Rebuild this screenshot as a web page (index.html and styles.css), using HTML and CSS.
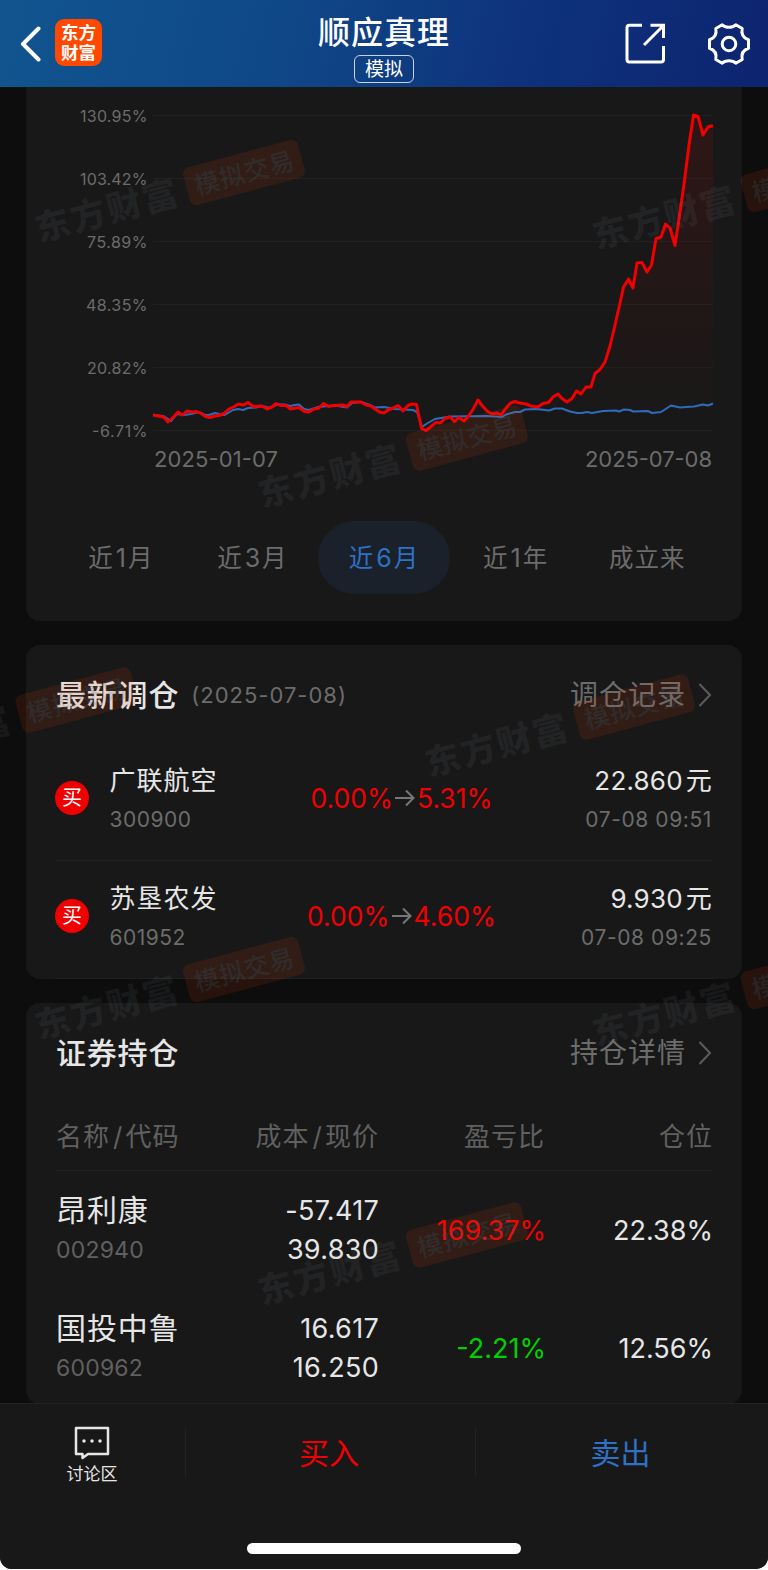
FILE: index.html
```html
<!DOCTYPE html>
<html lang="zh-CN">
<head>
<meta charset="utf-8">
<title>顺应真理</title>
<link rel="stylesheet" href="styles.css">
</head>
<body>
<div class="phone">
  <header class="topbar">
    <div class="topbar-side">
      <svg class="back" width="22" height="36" viewBox="0 0 22 36"><path d="M18.500 2.500 3 18l15.500 15.500" /></svg>
      <div class="logo"><span>东方</span><span>财富</span></div>
    </div>
    <div class="heading">
      <h1>顺应真理</h1>
      <span class="tag">模拟</span>
    </div>
    <div class="topbar-side topbar-end">
      <svg class="share" width="42" height="42" viewBox="0 0 42 42"><path d="M17 2.200H4.500Q2 2.200 2 4.700V36.500Q2 39 4.500 39H36Q38.500 39 38.500 36.500V23M25.500 2.200H38.500V15M38 3 19 22"/></svg>
      <svg class="gear" width="44" height="44" viewBox="0 0 44 44"><path d="M15.200 2.800C18.500 6 25.500 6 28.800 2.800L35.200 6.500C34.200 11.500 36 16 41.500 17.800V26.200C36 28 34.200 32.500 35.200 37.500L28.800 41.200C25.500 38 18.500 38 15.200 41.200L8.800 37.500C9.800 32.500 8 28 2.500 26.200V17.800C8 16 9.800 11.500 8.800 6.500Z"/><circle cx="22" cy="22" r="6.800"/></svg>
    </div>
  </header>

  <main class="content">
    <section class="card chart-card">
      <svg class="chart" width="716" height="400" viewBox="26 87 716 400">
        <defs><linearGradient id="area" x1="0" y1="115" x2="0" y2="431" gradientUnits="userSpaceOnUse"><stop offset="0" stop-color="#f00" stop-opacity=".1"/><stop offset="1" stop-color="#f00" stop-opacity="0"/></linearGradient></defs>
        <path class="grid" d="M153 115.500H713M153 178.500H713M153 241.500H713M153 304.500H713M153 367.500H713M153 430.500H713"/>
        <g class="axis">
          <text x="80" y="121.500" textLength="67.500">130.95%</text>
          <text x="80" y="184.500" textLength="67.500">103.42%</text>
          <text x="87" y="247.500" textLength="60.500">75.89%</text>
          <text x="86" y="310.500" textLength="61.500">48.35%</text>
          <text x="87" y="373.500" textLength="60.500">20.82%</text>
          <text x="92" y="436.500" textLength="55.500">-6.71%</text>
        </g>
        <g class="dates">
          <text x="154" y="466.500" textLength="124">2025-01-07</text>
          <text x="585" y="466.500" textLength="127">2025-07-08</text>
        </g>
        <path fill="url(#area)" d="M537 407 543 403.500 548.500 402.500 553 397 558 394 567 402 576.500 391 581 394 586 387 591 387 595 373.500 600 369.500 605 362 610 346 615 325 620 303 623.500 287 628.500 279 633 288 637 263 642 262.500 647 272 651.500 265 656 238.500 661 237 665.500 224 670 228 675 245.500 680 212 684 184 689 145 693.500 115 698 116.500 703 135 708 127 713 125.500V430H153V415L248 403 361 402 400 406 416.500 404.500 426 430 478 400 501 415 515 401.500Z"/>
        <polyline class="blue" points="153,415 163.500,416 171,421 177,414 184,415 191,414 199,412 205,415 209,415 215,413 219,414 224,415 228,413 233,410 238,409 243,410 248,408 256,407.500 262,406 270,408 277,404.500 285,404.500 290,406 295,405 299,404.500 304,409 309,410 318,407 328,406 338,406 347,407.500 352,403 361,402 370,405 375,407.500 384,407 395,409 413,410 417,412 422,427 427,423.500 435,419 450,416.500 487,416 502,417 506,414.500 515,412 520,412 525,409.500 537,409 549,410.500 555,408.500 562,408.500 570,411.500 577,413 582,413 587,412 592,413 603,411 616,410.500 619,411.500 624,409.500 630,410 633,411.500 648,411 652,413 661,412 671,405.500 680,407.500 686,407 694,406.500 703,404.500 708,405.500 713,403.500"/>
        <polyline class="red" points="153,415 158,416 163.500,417 168,422 173,417.500 178,412 182.500,415 187,411 192,412 196.500,411.500 201,413.500 205.500,416.500 210,417.500 215,416 219,415.500 224,413.500 229,409 233.500,407 238.500,404 243.500,405 248,402.500 253,406.500 262,406 267,409 272,407 276,403.500 280.500,405.500 286,405.500 290.500,409 299,407.500 304.500,411.500 309,412 313,409.500 319,408 323.500,403.500 328.500,406.500 333,405.500 343,405 347,406.500 351,402 361,402 366,405 371,406 375,409 379.500,412 384,413 388,410 393,408 398,405.500 403,411 408,405.500 412,404 416.500,404.500 421.500,428.500 426,430.500 431,426.500 436,422.500 440.500,423 445,418.500 450,417 454.500,421.500 459,417.500 464,421 468.500,416 473,409.500 478,400 482.500,406 487,411 492,414 497,413 501,415 506,408 510.500,403 515,401.500 519.500,403 526,404 531,406 538,407 543,403.500 548.500,402.500 553,397 558,394 562,398.500 567,402 572,398.500 576.500,391 581,394 586,387 591,387 595,373.500 600,369.500 605,362 610,346 615,325 620,303 623.500,287 628.500,279 633,288 637,263 642,262.500 647,272 651.500,265 656,238.500 661,237 665.500,224 670,228 675,245.500 680,212 684,184 689,145 693.500,115 698,116.500 703,135 708,127 713,125.500"/>
      </svg>
      <nav class="tabs">
        <span class="tab">近<i>1</i>月</span>
        <span class="tab">近<i>3</i>月</span>
        <span class="tab active">近<i>6</i>月</span>
        <span class="tab">近<i>1</i>年</span>
        <span class="tab">成立来</span>
      </nav>
    </section>

    <section class="card trades">
      <div class="card-head">
        <h2>最新调仓</h2><span class="head-date">(2025-07-08)</span>
        <a class="more">调仓记录<svg class="chev" width="14" height="24" viewBox="0 0 14 24"><path d="M1.500 1 12 12 1.500 23"/></svg></a>
      </div>
      <div class="trade">
        <span class="buy-dot">买</span>
        <div class="stock"><b>广联航空</b><small>300900</small></div>
        <div class="shift">0.00%<svg width="20" height="18" viewBox="0 0 20 18"><path d="M0 9H18.500M11 1.500 18.500 9 11 16.500"/></svg>5.31%</div>
        <div class="price"><b>22.860<i>元</i></b><small>07-08 09:51</small></div>
      </div>
      <div class="trade">
        <span class="buy-dot">买</span>
        <div class="stock"><b>苏垦农发</b><small>601952</small></div>
        <div class="shift">0.00%<svg width="20" height="18" viewBox="0 0 20 18"><path d="M0 9H18.500M11 1.500 18.500 9 11 16.500"/></svg>4.60%</div>
        <div class="price"><b>9.930<i>元</i></b><small>07-08 09:25</small></div>
      </div>
    </section>

    <section class="card holdings">
      <div class="card-head">
        <h2>证券持仓</h2>
        <a class="more">持仓详情<svg class="chev" width="14" height="24" viewBox="0 0 14 24"><path d="M1.500 1 12 12 1.500 23"/></svg></a>
      </div>
      <div class="hold hold-head">
        <span>名称<i>/</i>代码</span><span>成本<i>/</i>现价</span><span>盈亏比</span><span>仓位</span>
      </div>
      <div class="hold">
        <div class="name"><b>昂利康</b><small>002940</small></div>
        <div class="cost"><span>-57.417</span><span>39.830</span></div>
        <span class="up">169.37%</span><span>22.38%</span>
      </div>
      <div class="hold">
        <div class="name"><b>国投中鲁</b><small>600962</small></div>
        <div class="cost"><span>16.617</span><span>16.250</span></div>
        <span class="down">-2.21%</span><span>12.56%</span>
      </div>
    </section>

    <svg class="watermark" width="768" height="1316" viewBox="0 87 768 1316">
      <defs><g id="wm"><g transform="rotate(-15)">
        <text class="wm-brand" x="-216" y="14" textLength="146">东方财富</text>
        <rect class="wm-box" x="-59.500" y="-19.500" width="119" height="39" rx="7"/>
        <text class="wm-label" x="-51" y="9.500" textLength="102">模拟交易</text>
      </g></g></defs>
      <use href="#wm" x="244" y="172.500"/><use href="#wm" x="801.500" y="179.500"/>
      <use href="#wm" x="467" y="438"/>
      <use href="#wm" x="76.500" y="700"/><use href="#wm" x="634" y="707"/>
      <use href="#wm" x="244" y="969.500"/><use href="#wm" x="801.500" y="976.500"/>
      <use href="#wm" x="467" y="1235"/>
    </svg>
  </main>

  <footer class="bottom">
    <div class="actions">
      <div class="discuss">
        <svg width="36" height="34" viewBox="0 0 36 34"><path d="M2 2H34V28H14L8.500 32V28H2Z"/><path class="dots" d="M10 15h0M18 15h0M26 15h0"/></svg>
        <span>讨论区</span>
      </div>
      <div class="action buy">买入</div>
      <div class="action sell">卖出</div>
    </div>
    <div class="home"></div>
  </footer>
</div>
</body>
</html>
```
FILE: styles.css
```css
* { box-sizing: border-box; }
body { margin: 0; background: #fff; font-family: Inter, "Noto Sans CJK SC", sans-serif; color: #e6e6e6; }
i, b, small { font-style: normal; font-weight: 400; }
svg { display: block; flex: none; }
.phone { width: 768px; height: 1569px; background: #0d0d0d; border-radius: 0 0 12px 12px; overflow: hidden; display: flex; flex-direction: column; }

.topbar { height: 87px; flex: none; display: grid; grid-template-columns: 1fr auto 1fr; background: linear-gradient(105deg, #11558f 0%, #0f4787 38%, #0e327c 68%, #0d2470 100%); color: #fff; }
.topbar-side { display: flex; align-items: flex-start; padding: 19px 0 0 20px; }
.topbar-end { justify-content: flex-end; padding: 22px 17px 0 0; gap: 40px; }
.back { margin: 7px 13px 0 0; }
.back path { fill: none; stroke: #fff; stroke-width: 4; stroke-linecap: round; stroke-linejoin: round; }
.share path, .gear path, .gear circle { fill: none; stroke: #fff; stroke-width: 3; }
.share { margin-top: 1px; }
.gear path { stroke-linejoin: round; }
.logo { width: 47px; height: 47px; border-radius: 9px; background: #ff4800; display: flex; flex-direction: column; align-items: center; justify-content: center; font-size: 17.500px; line-height: 19.500px; font-weight: 700; }
.heading { display: flex; flex-direction: column; align-items: center; }
.heading h1 { margin: 13px 0 0; font-size: 32px; line-height: 40px; font-weight: 500; letter-spacing: 1px; }
.tag { margin-top: 2px; width: 60px; height: 28px; border: 1.500px solid #c8d3e6; border-radius: 6px; font-size: 19px; line-height: 28px; text-align: center; }

.content { position: relative; height: 1316px; flex: none; padding: 0 26px; overflow: hidden; display: flex; flex-direction: column; gap: 24px; }
.card { background: #181818; border-radius: 14px; flex: none; }
.chart-card { height: 534px; border-radius: 0 0 14px 14px; }
.chart text { fill: #6c6c6c; }
.axis { font-size: 16px; }
.dates { font-size: 22px; }
.grid { stroke: #202020; stroke-width: 1; }
.red, .blue { fill: none; stroke-linejoin: round; }
.red { stroke: #f00000; stroke-width: 3; }
.blue { stroke: #2e6cbb; stroke-width: 2; }
.tabs { display: flex; padding: 0 29px; margin-top: 34px; }
.tab { flex: 1; height: 72.500px; border-radius: 37px; line-height: 75px; text-align: center; color: #6c6c6c; font-size: 24.500px; letter-spacing: 1px; }
.tab i { margin: 0 1px 0 2px; font-size: 25px; }
.tab.active { background: #1a212a; color: #2e71c5; }

.card-head { display: flex; align-items: center; padding: 0 29px 0 30px; }
.card-head h2 { margin: 0; font-size: 30px; line-height: 40px; font-weight: 500; letter-spacing: .800px; }
.head-date { margin-left: 12px; color: #6c6c6c; font-size: 22px; letter-spacing: 1px; }
.more { margin-left: auto; display: flex; align-items: center; gap: 12px; padding-right: 1px; color: #6c6c6c; font-size: 28px; line-height: 40px; letter-spacing: 1px; }
.chev path { fill: none; stroke: #5c5c5c; stroke-width: 2; }

.trades { height: 334px; padding-top: 30px; }
.trades .card-head { height: 40px; margin-bottom: 28px; }
.trade { height: 118px; margin: 0 29px; padding-bottom: 7px; border-bottom: 1px solid #202020; display: grid; grid-template-columns: 54.500px 152px 280px 1fr; align-items: center; }
.buy-dot { width: 34px; height: 34px; border-radius: 50%; background: #f00000; color: #fff; font-size: 20px; line-height: 34px; text-align: center; }
.stock, .price { display: flex; flex-direction: column; padding-top: 3px; }
.stock b { font-size: 26px; line-height: 39px; letter-spacing: 1px; }
.stock small, .price small { font-size: 21px; line-height: 39px; letter-spacing: .500px; color: #6c6c6c; }
.shift { display: flex; align-items: center; justify-content: center; gap: 2px; color: #f00000; font-size: 26.500px; }
.shift path { fill: none; stroke: #777; stroke-width: 2; }
.price { text-align: right; padding-right: 1px; }
.price b { font-size: 26px; line-height: 39px; letter-spacing: .200px; }
.price small { letter-spacing: .600px; }
.price i { margin-left: 3px; }

.holdings { height: 401px; padding-top: 30px; }
.holdings .card-head { height: 40px; }
.hold { height: 118px; margin: 0 29px; display: grid; grid-template-columns: 150px 174px 166px 1fr; align-items: center; text-align: right; font-size: 27px; }
.hold-head { height: 98px; padding-top: 26px; color: #606060; font-size: 26px; letter-spacing: 1px; border-bottom: 1px solid #202020; }
.hold-head i { margin: 0 2px 0 3px; }
.hold-head span:first-child { text-align: left; padding-left: 1px; }
.name, .cost { display: flex; flex-direction: column; line-height: 39px; }
.cost { letter-spacing: .300px; }
.up, .down { padding-left: 1px; margin-right: -1px; }
.name { text-align: left; padding-left: 1px; }
.name b { font-size: 30px; letter-spacing: .900px; }
.name small { font-size: 23px; letter-spacing: .200px; line-height: 40px; color: #606060; }
.up { color: #f00000; }
.down { color: #00d000; }

.watermark { position: absolute; left: 0; top: 0; pointer-events: none; }
.wm-brand { font-size: 35px; font-weight: 900; fill: rgba(140, 150, 155, .09); }
.wm-box { fill: rgba(255, 75, 0, .11); }
.wm-label { font-size: 25px; font-weight: 500; fill: rgba(50, 110, 140, .200); }

.bottom { flex: 1; background: #181818; border-top: 1px solid #222; display: flex; flex-direction: column; align-items: center; }
.actions { width: 100%; height: 49px; margin-top: 24px; display: grid; grid-template-columns: 185px 290px 1fr; grid-template-rows: 49px; }
.discuss { display: flex; flex-direction: column; align-items: center; margin: -2px 1px 0 0; font-size: 17px; line-height: 29px; }
.discuss path { fill: none; stroke: #e6e6e6; stroke-width: 2.500; stroke-linejoin: round; }
.discuss .dots { stroke-width: 3.500; stroke-linecap: round; }
.action { border-left: 1px solid #222; padding-right: 3px; text-align: center; font-size: 30px; line-height: 51px; }
.buy { color: #f00000; }
.sell { color: #2e71c5; }
.home { margin-top: 66px; width: 274px; height: 11px; border-radius: 6px; background: #fff; }
```
